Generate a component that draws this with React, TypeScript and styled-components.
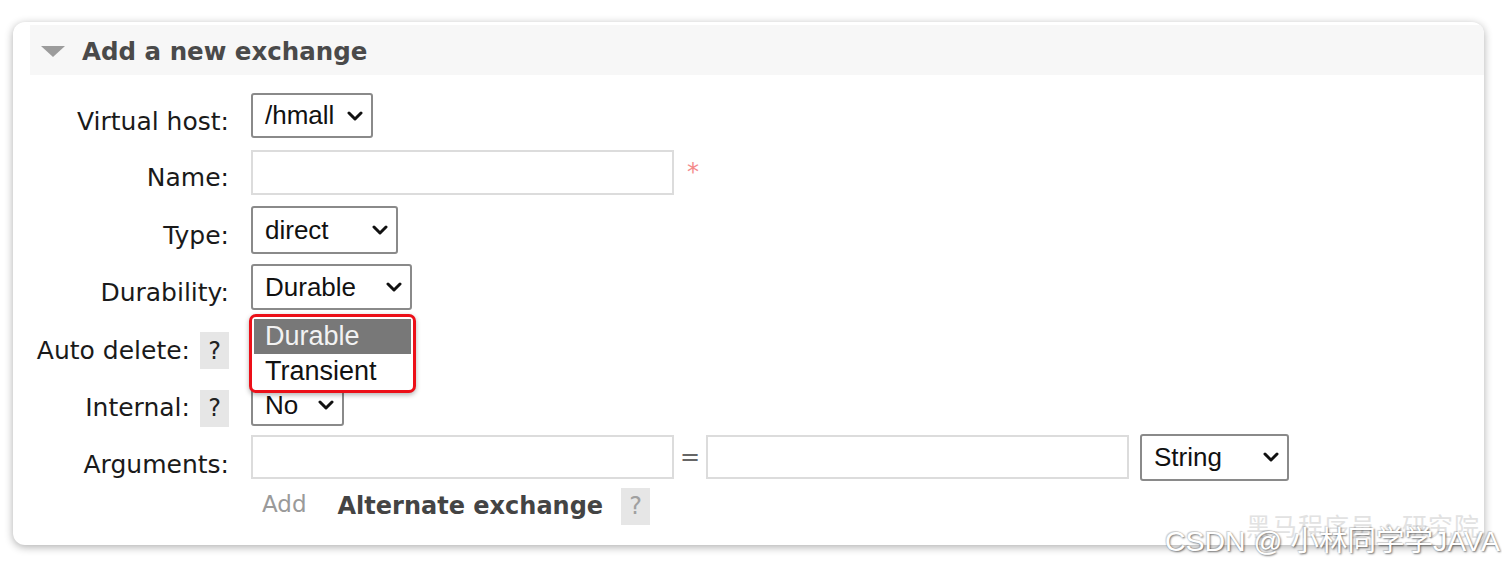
import React from 'react';
import styled, { createGlobalStyle } from 'styled-components';

const GlobalStyle = createGlobalStyle`
  html, body {
    margin: 0;
    padding: 0;
    background: #fff;
  }
  body {
    font-family: "DejaVu Sans", Verdana, sans-serif;
  }
`;

const Page = styled.div`
  position: relative;
  width: 1502px;
  height: 567px;
  box-sizing: border-box;
  padding: 22px 18px 0 13px;
  overflow: hidden;
`;

const Card = styled.section`
  height: 523px;
  box-sizing: border-box;
  padding: 3px 0 0 17px;
  border-radius: 12px;
  background: #fff;
  box-shadow: 0 2px 9px rgba(0, 0, 0, 0.32);
  overflow: hidden;
`;

const Header = styled.h2`
  margin: 0;
  height: 50px;
  box-sizing: border-box;
  padding: 3px 0 0 11px;
  display: flex;
  align-items: center;
  gap: 17px;
  background: #f7f7f7;
  font: bold 24.5px "DejaVu Sans", Verdana, sans-serif;
  color: #4a4a4a;
`;

const Form = styled.div`
  display: flex;
  flex-direction: column;
  padding-top: 12px;
`;

const Row = styled.div<{ $h: number }>`
  display: flex;
  align-items: center;
  height: ${({ $h }) => $h}px;
`;

const Label = styled.div<{ $shift: number }>`
  width: 199px;
  box-sizing: border-box;
  padding-top: ${({ $shift }) => $shift}px;
  display: flex;
  justify-content: flex-end;
  align-items: center;
  gap: 10px;
  font-size: 25px;
  line-height: 28px;
  color: #1a1a1a;
`;

const Controls = styled.div<{ $indent?: number; $gap?: number }>`
  margin-left: ${({ $gap }) => $gap ?? 22}px;
  padding-left: ${({ $indent }) => $indent ?? 0}px;
  display: flex;
  align-items: center;
`;

const SelectBox = styled.div<{ $w: number; $h: number }>`
  position: relative;
  width: ${({ $w }) => $w}px;
  height: ${({ $h }) => $h}px;
  box-sizing: border-box;
  display: flex;
  align-items: center;
  justify-content: space-between;
  padding: 0 8px 0 12px;
  border: 2px solid #8a8a8a;
  border-radius: 3px;
  background: #fff;
  font: 26px "Liberation Sans", Arial, sans-serif;
  color: #111;
`;

const TextInput = styled.div<{ $w: number; $h: number }>`
  width: ${({ $w }) => $w}px;
  height: ${({ $h }) => $h}px;
  box-sizing: border-box;
  border: 2px solid #dcdcdc;
  background: #fff;
`;

const Required = styled.span`
  margin-left: 13px;
  align-self: flex-start;
  margin-top: 8px;
  font-size: 24px;
  color: #f48a8a;
`;

const Equals = styled.span`
  width: 32px;
  text-align: center;
  font-size: 24px;
  color: #666;
`;

const Help = styled.span<{ $muted?: boolean }>`
  display: inline-flex;
  align-items: center;
  justify-content: center;
  width: 29px;
  height: 37px;
  background: #e6e6e6;
  font-size: 24px;
  color: ${({ $muted }) => ($muted ? '#a0a0a0' : '#222')};
`;

const AddLink = styled.span`
  padding-bottom: 4px;
  font-size: 23px;
  color: #9a9a9a;
`;

const SubTitle = styled.span`
  margin: 0 18px 0 31px;
  font: bold 24px "DejaVu Sans", Verdana, sans-serif;
  color: #444;
`;

const Popup = styled.ul`
  position: absolute;
  z-index: 10;
  top: 48px;
  left: -4px;
  width: 167px;
  height: 79px;
  box-sizing: border-box;
  margin: 0;
  padding: 2px;
  list-style: none;
  border: 3px solid #ec0f18;
  border-radius: 7px;
  background: #fff;
  box-shadow: 0 2px 5px rgba(0, 0, 0, 0.3);
`;

const Option = styled.li<{ $active?: boolean }>`
  height: ${({ $active }) => ($active ? 35 : 34)}px;
  display: flex;
  align-items: center;
  padding-left: 11px;
  font: 27px "Liberation Sans", Arial, sans-serif;
  background: ${({ $active }) => ($active ? '#787878' : 'transparent')};
  color: ${({ $active }) => ($active ? '#f2f2f2' : '#111')};
`;

const Watermark = styled.div`
  position: absolute;
  right: 2px;
  bottom: 10px;
  font: 28.5px "Liberation Sans", "Noto Sans CJK SC", sans-serif;
  line-height: 32px;
  white-space: pre;
  color: #fff;
  text-shadow: 1px 1px 2px rgba(0, 0, 0, 0.55), -1px -1px 1px rgba(0, 0, 0, 0.18);
`;

const FaintMark = styled.div`
  position: absolute;
  right: 22px;
  bottom: 27px;
  font: 25px "Noto Sans CJK SC", sans-serif;
  line-height: 30px;
  letter-spacing: 1px;
  color: #e2e2e2;
`;

function Chevron() {
  return (
    <svg width="16" height="10" viewBox="0 0 16 10">
      <polyline points="2,2 8,8 14,2" fill="none" stroke="#111" strokeWidth="3" strokeLinecap="round" strokeLinejoin="round" />
    </svg>
  );
}

function Triangle() {
  return (
    <svg width="24" height="11" viewBox="0 0 24 11">
      <polygon points="0,0 24,0 12,11" fill="#9c9c9c" />
    </svg>
  );
}

function Select({ value, w, h, children }: { value: string; w: number; h: number; children?: React.ReactNode }) {
  return (
    <SelectBox $w={w} $h={h}>
      <span>{value}</span>
      <Chevron />
      {children}
    </SelectBox>
  );
}

export default function App() {
  return (
    <>
      <GlobalStyle />
      <Page>
        <Card>
          <Header>
            <Triangle />
            Add a new exchange
          </Header>
          <Form>
            <Row $h={57}>
              <Label $shift={13}>Virtual host:</Label>
              <Controls>
                <Select value="/hmall" w={122} h={45} />
              </Controls>
            </Row>
            <Row $h={57}>
              <Label $shift={11}>Name:</Label>
              <Controls>
                <TextInput $w={423} $h={45} />
                <Required>*</Required>
              </Controls>
            </Row>
            <Row $h={58}>
              <Label $shift={12}>Type:</Label>
              <Controls>
                <Select value="direct" w={147} h={48} />
              </Controls>
            </Row>
            <Row $h={56}>
              <Label $shift={12}>Durability:</Label>
              <Controls>
                <Select value="Durable" w={161} h={46}>
                  <Popup>
                    <Option $active>Durable</Option>
                    <Option>Transient</Option>
                  </Popup>
                </Select>
              </Controls>
            </Row>
            <Row $h={69}>
              <Label $shift={2}>
                Auto delete: <Help>?</Help>
              </Label>
              <Controls>
                <Select value="No" w={93} h={42} />
              </Controls>
            </Row>
            <Row $h={42}>
              <Label $shift={6}>
                Internal: <Help>?</Help>
              </Label>
              <Controls>
                <Select value="No" w={93} h={42} />
              </Controls>
            </Row>
            <Row $h={62}>
              <Label $shift={16}>Arguments:</Label>
              <Controls>
                <TextInput $w={423} $h={44} />
                <Equals>=</Equals>
                <TextInput $w={423} $h={44} />
                <Controls $gap={11}>
                  <Select value="String" w={149} h={47} />
                </Controls>
              </Controls>
            </Row>
            <Row $h={36}>
              <Label $shift={0} />
              <Controls $indent={11}>
                <AddLink>Add</AddLink>
                <SubTitle>Alternate exchange</SubTitle>
                <Help $muted>?</Help>
              </Controls>
            </Row>
          </Form>
        </Card>
        <FaintMark>黑马程序员·研究院</FaintMark>
        <Watermark>CSDN @ 小林同学学JAVA</Watermark>
      </Page>
    </>
  );
}
